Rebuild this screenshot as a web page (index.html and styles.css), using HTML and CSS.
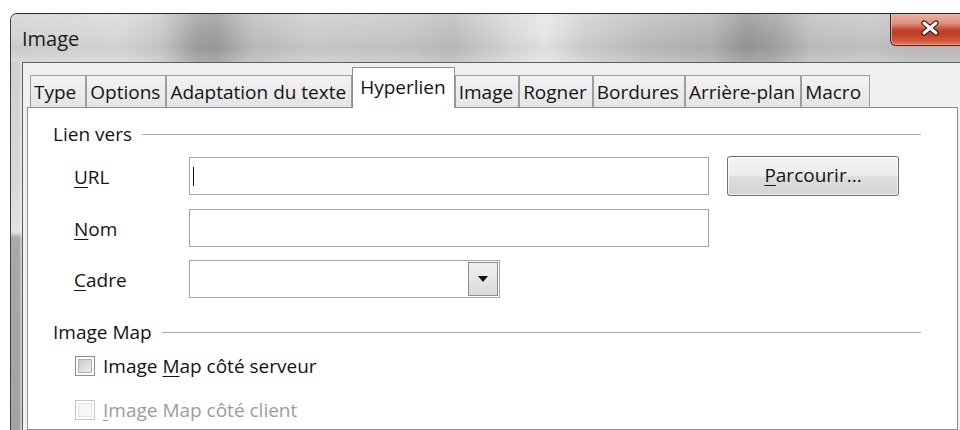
FILE: index.html
```html
<!DOCTYPE html>
<html lang="fr">
<head>
<meta charset="utf-8">
<title>Image</title>
<link rel="stylesheet" href="styles.css">
</head>
<body>
<div class="window">
  <div class="titlebar">
    <span class="caption">Image</span>
    <button class="close" aria-label="Fermer">
      <svg width="22" height="16" viewBox="0 0 22 16" aria-hidden="true">
        <path d="M5 3 L17 13 M17 3 L5 13" stroke="#3b1710" stroke-width="5.4" stroke-linecap="round" fill="none"/>
        <path d="M5 3 L17 13 M17 3 L5 13" stroke="#ffffff" stroke-width="3" stroke-linecap="round" fill="none"/>
      </svg>
    </button>
  </div>
  <div class="frame">
    <div class="frame-side"></div>
    <div class="dialog">
      <div class="tabs">
        <div class="tab tab-type">Type</div>
        <div class="tab">Options</div>
        <div class="tab">Adaptation du texte</div>
        <div class="tab active">Hyperlien</div>
        <div class="tab">Image</div>
        <div class="tab">Rogner</div>
        <div class="tab">Bordures</div>
        <div class="tab">Arrière-plan</div>
        <div class="tab tab-macro">Macro</div>
      </div>
      <div class="panel">
        <div class="group-head"><span>Lien vers</span><span class="rule"></span></div>
        <div class="fields">
          <label class="field-label"><u>U</u>RL</label>
          <div class="textbox"><span class="caret"></span></div>
          <button class="btn"><u>P</u>arcourir...</button>

          <label class="field-label"><u>N</u>om</label>
          <div class="textbox"></div>
          <span></span>

          <label class="field-label"><u>C</u>adre</label>
          <div class="combo">
            <span class="combo-text"></span>
            <span class="combo-btn">
              <svg width="10" height="6" viewBox="0 0 10 6" aria-hidden="true"><polygon points="0,0 10,0 5,6" fill="#111"/></svg>
            </span>
          </div>
          <span></span>
        </div>

        <div class="group-head map-head"><span>Image Map</span><span class="rule"></span></div>
        <div class="check-row first">
          <span class="check"></span>
          <span>Image <u>M</u>ap côté serveur</span>
        </div>
        <div class="check-row disabled">
          <span class="check"></span>
          <span><u>I</u>mage Map côté client</span>
        </div>
      </div>
    </div>
  </div>
</div>
</body>
</html>
```

FILE: styles.css
```css
html, body {
  margin: 0;
  background: #fff;
  overflow: hidden;
}

body {
  font-family: "Open Sans", "Noto Sans", sans-serif;
  font-size: 19px;
  color: #141414;
}

u {
  text-decoration-thickness: 1px;
  text-underline-offset: 3px;
}

/* ---- window chrome ---- */
.window {
  box-sizing: border-box;
  width: 960px;
  height: 417px;
  margin: 13px 0 0 10px;
  border-left: 1px solid #3e3e3e;
  border-top: 1px solid #262626;
  border-top-left-radius: 7px;
  display: flex;
  flex-direction: column;
  overflow: hidden;
}

.titlebar {
  flex: none;
  height: 48px;
  display: flex;
  align-items: flex-start;
  background:
    linear-gradient(to bottom, rgba(255,255,255,0.18), rgba(255,255,255,0) 45%, rgba(0,0,0,0.04) 70%, rgba(255,255,255,0.12)),
    linear-gradient(to right,
      #d3d3d3 0, #d8d8d8 110px, #c9c9c9 150px, #a2a2a2 185px, #9d9d9d 205px,
      #bdbdbd 240px, #cccccc 300px, #c6c6c6 400px, #bcbcbc 440px, #d9d9d9 500px,
      #e6e6e6 535px, #cfcfcf 575px, #bdbdbd 640px, #b3b3b3 700px, #989898 735px,
      #a4a4a4 765px, #c0c0c0 800px, #c6c6c6 860px, #bdbdbd 900px);
}

.caption {
  margin: 13px 0 0 11px;
  font-size: 20px;
  line-height: 24px;
  color: #1a1a1a;
}

.close {
  margin-left: auto;
  box-sizing: border-box;
  width: 80px;
  height: 32px;
  padding: 0 0 3px;
  border: 1px solid #5a1d12;
  border-top: none;
  border-bottom-left-radius: 6px;
  box-shadow: inset 1px 0 0 rgba(255,210,200,0.6), inset 0 -1px 0 rgba(255,190,170,0.5);
  background: linear-gradient(to bottom, #eab2a4 0%, #e0917e 30%, #c9472d 50%, #c03a20 62%, #d0573a 85%, #de7a5c 100%);
  display: flex;
  align-items: center;
  justify-content: center;
}

.frame {
  flex: 1;
  min-height: 0;
  display: flex;
}

.frame-side {
  flex: none;
  width: 11px;
  border-right: 1px solid #5c5c5c;
  background: linear-gradient(to bottom, #cfcfcf 0, #d9d9d9 120px, #e2e2e2 170px, #a9a9a9 176px, #a3a3a3 100%);
  box-shadow: inset -2px 0 0 rgba(255,255,255,0.35);
}

.dialog {
  flex: 1;
  min-width: 0;
  background: #f0f0f0;
  border-top: 1px solid #5c5c5c;
  padding: 0 12px 0 4px;
  display: flex;
  flex-direction: column;
}

/* ---- tab strip ---- */
.tabs {
  flex: none;
  height: 44px;
  padding-left: 3px;
  display: flex;
  align-items: flex-end;
}

.tab {
  box-sizing: border-box;
  height: 32px;
  padding: 1px 5px 0 3px;
  border: 1px solid #9d9d9d;
  border-bottom: none;
  background: linear-gradient(to bottom, #f3f3f3, #e4e4e4);
  display: flex;
  align-items: center;
  white-space: nowrap;
  line-height: 1;
}

.tab-type {
  padding-right: 9px;
}

.tab-macro {
  padding-right: 8px;
}

.tab.active {
  position: relative;
  z-index: 1;
  height: 41px;
  margin-bottom: -1px;
  padding: 0 8px 2px 7px;
  background: #fff;
  border-color: #8f8f8f;
}

/* ---- page body ---- */
.panel {
  flex: 1;
  background: #fff;
  border: 1px solid #8c8e94;
  padding: 14px 36px 0 25px;
}

.group-head {
  height: 24px;
  line-height: 24px;
  display: flex;
  align-items: center;
  gap: 10px;
}

.group-head .rule {
  flex: 1;
  height: 0;
  border-top: 1px solid #a9a9a9;
}

.fields {
  display: grid;
  grid-template-columns: 115px 520px auto;
  row-gap: 13px;
  align-items: center;
  margin: 10px 0 0 21px;
}

.field-label {
  line-height: 24px;
  padding-top: 2px;
}

.textbox {
  position: relative;
  box-sizing: border-box;
  height: 38px;
  border: 1px solid #a6a6a6;
  background: #fff;
}

.caret {
  position: absolute;
  left: 3px;
  top: 9px;
  width: 1px;
  height: 19px;
  background: #111;
}

.btn {
  box-sizing: border-box;
  width: 172px;
  height: 40px;
  margin-left: 18px;
  border: 1px solid #6f6f6f;
  border-radius: 3px;
  background: linear-gradient(to bottom, #f4f4f4 0%, #ececec 48%, #dedede 52%, #d4d4d4 100%);
  box-shadow: inset 0 0 0 1px rgba(255,255,255,0.7);
  font: inherit;
  color: #141414;
  padding: 0 0 2px;
}

.combo {
  box-sizing: border-box;
  width: 311px;
  height: 38px;
  border: 1px solid #a6a6a6;
  background: #fff;
  display: flex;
}

.combo-text {
  flex: 1;
}

.combo-btn {
  box-sizing: border-box;
  width: 30px;
  margin: 1px;
  border: 1px solid #8b8b8b;
  background: linear-gradient(to bottom, #f1f1f1, #dadada);
  display: flex;
  align-items: center;
  justify-content: center;
}

.map-head {
  margin-top: 22px;
}

.check-row {
  height: 24px;
  line-height: 24px;
  margin-left: 22px;
  display: flex;
  align-items: center;
  gap: 8px;
}

.check-row.first {
  margin-top: 10px;
}

.check-row.disabled {
  margin-top: 20px;
  color: #9c9c9c;
}

.check {
  box-sizing: border-box;
  width: 20px;
  height: 20px;
  padding: 2px;
  border: 1px solid #8d8d8d;
  background: #fff;
}

.check::before {
  content: "";
  display: block;
  box-sizing: border-box;
  width: 100%;
  height: 100%;
  border: 1px solid #b3b3b3;
  background: linear-gradient(135deg, #c9c9c9, #ededed);
}

.check-row.disabled .check {
  border-color: #c6c6c6;
}

.check-row.disabled .check::before {
  border-color: #e3e3e3;
  background: #f6f6f6;
}
```
